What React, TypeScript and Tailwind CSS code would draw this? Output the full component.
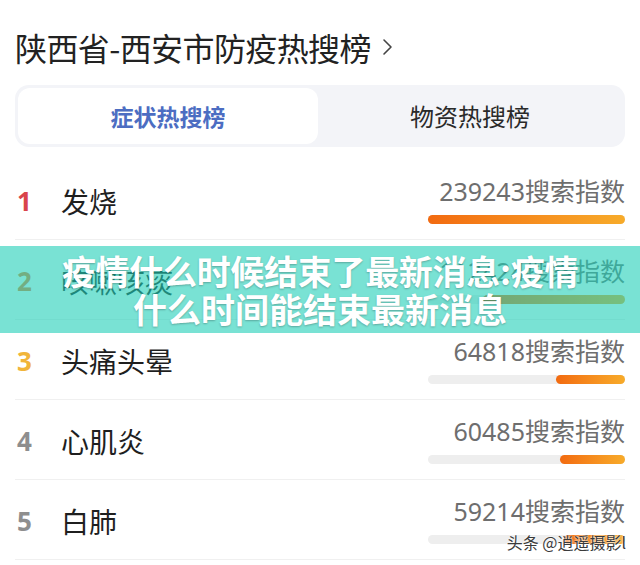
import React from 'react';

interface HotItem {
  rank: number;
  name: string;
  score: string;
  fill: number;
}

const items: HotItem[] = [
  { rank: 1, name: '发烧', score: '239243', fill: 100 },
  { rank: 2, name: '咳嗽咳痰', score: '112424', fill: 72 },
  { rank: 3, name: '头痛头晕', score: '64818', fill: 35 },
  { rank: 4, name: '心肌炎', score: '60485', fill: 33 },
  { rank: 5, name: '白肺', score: '59214', fill: 31 },
];

const rankColor = (rank: number) => {
  switch (rank) {
    case 1: return 'text-[#d9444b]';
    case 2: return 'text-[#f07d34]';
    case 3: return 'text-[#f1b53a]';
    default: return 'text-[#8e8e8e]';
  }
};

export default function App() {
  return (
    <div className="relative w-[640px] h-[565px] overflow-hidden bg-white font-['Noto_Sans','Noto_Sans_CJK_SC',sans-serif]">
      <div className="px-[15px]">
        {/* Title */}
        <div className="flex items-center pt-[26px] h-[68px]">
          <h1 className="text-[32px] leading-[40px] text-[#222] font-['Noto_Sans_CJK_SC',sans-serif] tracking-[-0.6px]">陕西省-西安市防疫热搜榜</h1>
          <svg className="w-[16px] h-[20px] ml-[8px] text-[#444]" fill="none" stroke="currentColor" viewBox="0 0 16 20">
            <path strokeWidth={1.6} strokeLinecap="round" strokeLinejoin="round" d="M5 3l7 7-7 7" />
          </svg>
        </div>

        {/* Tabs */}
        <div className="mt-[17px] h-[62px] bg-[#f3f4f8] rounded-[14px] p-[3px] flex">
          <div className="w-[300px] bg-white rounded-[12px] flex items-center justify-center">
            <span className="text-[23px] font-bold text-[#4c6dc2] font-['Noto_Sans_CJK_SC',sans-serif]">症状热搜榜</span>
          </div>
          <div className="flex-1 flex items-center justify-center">
            <span className="text-[24px] text-[#2a2a2a] font-['Noto_Sans_CJK_SC',sans-serif]">物资热搜榜</span>
          </div>
        </div>

        {/* List */}
        <div className="mt-[13px]">
          {items.map((item) => (
            <div key={item.rank} className="h-[80px] flex items-start border-b border-[#f0f0f0]">
              <div className="flex items-center h-full">
                <span className={`w-[46px] pl-[2px] text-[26px] leading-[32px] font-bold mt-[2px] ${rankColor(item.rank)}`}>{item.rank}</span>
                <span className="text-[28px] leading-[36px] text-[#1f1f1f] font-['Noto_Sans_CJK_SC',sans-serif] mt-[2px]">{item.name}</span>
              </div>
              <div className="ml-auto w-[197px] pt-[15px] flex flex-col items-end">
                <span className="text-[25px] leading-[30px] text-[#6e6e6e] whitespace-nowrap">
                  {item.score}<span className="font-['Noto_Sans_CJK_SC',sans-serif]">搜索指数</span>
                </span>
                <div className="mt-[9px] w-full h-[9px] rounded-full bg-[#eeeeee] flex justify-end">
                  <div
                    className="h-full rounded-full bg-gradient-to-r from-[#f26a10] to-[#f7ab2a]"
                    style={{ width: `${item.fill}%` }}
                  />
                </div>
              </div>
            </div>
          ))}
        </div>
      </div>

      {/* Headline overlay */}
      <div className="absolute left-0 right-0 top-[246px] h-[87px] bg-[#1fcfb8]/60 flex flex-col items-center justify-center">
        <p className="text-[34px] leading-[38px] font-bold text-white font-['Noto_Sans_CJK_SC',sans-serif] [text-shadow:0_1px_2px_rgba(0,0,0,0.25)] tracking-[-0.3px]">疫情什么时候结束了最新消息:疫情</p>
        <p className="text-[34px] leading-[38px] font-bold text-white font-['Noto_Sans_CJK_SC',sans-serif] [text-shadow:0_1px_2px_rgba(0,0,0,0.25)]">什么时间能结束最新消息</p>
      </div>

      {/* Watermark */}
      <div className="absolute right-[14px] top-[532px] text-[16px] leading-[20px] text-[#3a3a3a] font-['Noto_Sans_CJK_SC',sans-serif] [text-shadow:0_0_2px_#fff,0_0_2px_#fff]">
        头条 @逍遥摄影l
      </div>
    </div>
  );
}
